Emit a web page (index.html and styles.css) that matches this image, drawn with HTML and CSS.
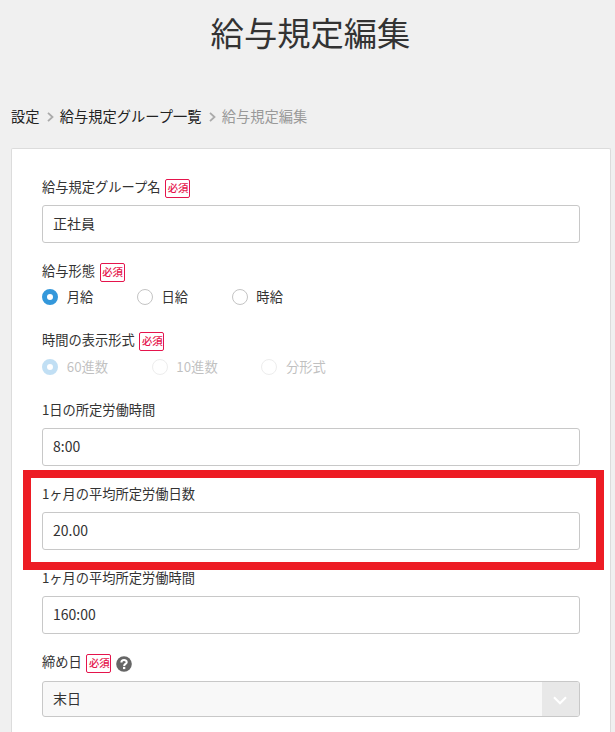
FILE: index.html
```html
<!DOCTYPE html>
<html lang="ja">
<head>
<meta charset="utf-8">
<title>給与規定編集</title>
<link rel="stylesheet" href="styles.css">
</head>
<body>
<h1 class="title">給与規定編集</h1>
<nav class="crumbs">
  <a>設定</a>
  <svg class="sep" viewBox="0 0 7 10"><path d="M1 .8l4.5 4.2L1 9.2"/></svg>
  <a>給与規定グループ一覧</a>
  <svg class="sep" viewBox="0 0 7 10"><path d="M1 .8l4.5 4.2L1 9.2"/></svg>
  <span class="current">給与規定編集</span>
</nav>
<main class="card">
  <section class="field">
    <div class="label">給与規定グループ名<span class="badge">必須</span></div>
    <div class="input">正社員</div>
  </section>
  <section class="field radio-field">
    <div class="label">給与形態<span class="badge">必須</span></div>
    <div class="radios">
      <span class="radio on">月給</span><span class="radio">日給</span><span class="radio">時給</span>
    </div>
  </section>
  <section class="field radio-field second">
    <div class="label">時間の表示形式<span class="badge">必須</span></div>
    <div class="radios disabled">
      <span class="radio on">60進数</span><span class="radio">10進数</span><span class="radio">分形式</span>
    </div>
  </section>
  <section class="field">
    <div class="label">1日の所定労働時間</div>
    <div class="input">8:00</div>
  </section>
  <section class="field marked">
    <div class="label">1ヶ月の平均所定労働日数</div>
    <div class="input">20.00</div>
  </section>
  <section class="field">
    <div class="label">1ヶ月の平均所定労働時間</div>
    <div class="input">160:00</div>
  </section>
  <section class="field last">
    <div class="label">締め日<span class="badge">必須</span>
      <svg class="help" viewBox="0 0 16 16"><circle cx="8" cy="8" r="7.8" fill="#666"/><path d="M5.4 6.5C5.4 3.3 10.7 3.3 10.7 6.2C10.7 8 8.2 7.9 8.2 9.9" fill="none" stroke="#fff" stroke-width="2.1"/><rect x="7" y="10.9" width="2.3" height="2.2" fill="#fff"/></svg>
    </div>
    <div class="select"><span>末日</span><span class="arrow"><svg viewBox="0 0 14 9"><path d="M1 1.2l6 6 6-6"/></svg></span></div>
  </section>
</main>
</body>
</html>
```
FILE: styles.css
```css
*, *::before, *::after { box-sizing: border-box; }
body {
  margin: 0;
  background: #f0f0f0;
  color: #333;
  font-family: "Noto Sans CJK JP", sans-serif;
  font-size: 14px;
}
.title {
  margin: 0;
  padding: 8px 0 0 6px;
  height: 101px;
  line-height: 48px;
  font-size: 33.3px;
  font-weight: 400;
  text-align: center;
}
.crumbs {
  display: flex;
  align-items: center;
  height: 30px;
  margin-left: 11px;
  font-size: 14.25px;
  line-height: 30px;
  color: #222;
}
.sep {
  width: 7px;
  height: 10px;
  margin: 1px 6px 0 7.3px;
  fill: none;
  stroke: #aaa;
  stroke-width: 1.8;
}
.current { color: #999; }
.card {
  width: 600px;
  height: 584px;
  margin: 17px 0 0 11px;
  padding: 26px 30px 0;
  background: #fff;
  border: 1px solid #dcdcdc;
  border-bottom: 0;
  border-radius: 2px 2px 0 0;
}
.field { margin-bottom: 16px; }
.field.last { margin-bottom: 0; }
.label {
  display: flex;
  align-items: center;
  height: 24px;
  margin-bottom: 6px;
  font-size: 13.25px;
  line-height: 24px;
}
.badge {
  width: 25px;
  height: 19px;
  margin: 2px 0 0 4.6px;
  padding-left: 1px;
  border: 1px solid #e5144c;
  border-radius: 2px;
  color: #e5144c;
  font-size: 10.4px;
  font-weight: 500;
  line-height: 16px;
  text-align: center;
  white-space: nowrap;
}
.input, .select {
  height: 38px;
  padding-left: 10px;
  border: 1px solid #c8c8c8;
  border-radius: 3px;
  font-size: 14px;
  line-height: 35px;
}
.radio-field { margin-bottom: 21px; }
.radio-field .label { margin-bottom: 4px; }
.radio-field.second .label { margin-bottom: 5px; }
.radios { display: flex; gap: 43.4px; height: 20px; }
.radio {
  display: flex;
  align-items: center;
  font-size: 13.3px;
  line-height: 20px;
}
.radio::before {
  content: "";
  width: 16px;
  height: 16px;
  margin-right: 8.8px;
  border: 1px solid #c4c4c4;
  border-radius: 50%;
}
.radio.on::before { border: 5px solid #3498db; }
.disabled .radio { opacity: .3; }
.marked { position: relative; }
.marked::after {
  content: "";
  position: absolute;
  left: -19px;
  right: -24px;
  top: -12px;
  height: 100px;
  border: 8px solid #ed1c24;
}
.help { width: 16px; height: 16px; margin: 4px 0 0 5px; }
.select {
  display: flex;
  justify-content: space-between;
  height: 36px;
  margin-top: 7px;
  line-height: 32px;
  background: #f8f8f8;
  overflow: hidden;
}
.arrow {
  display: flex;
  align-items: center;
  justify-content: center;
  width: 37px;
  background: #e8e8e8;
}
.arrow svg {
  width: 14px;
  height: 9px;
  margin: 3px 2px 0 0;
  fill: none;
  stroke: #fff;
  stroke-width: 2.1;
}
```
